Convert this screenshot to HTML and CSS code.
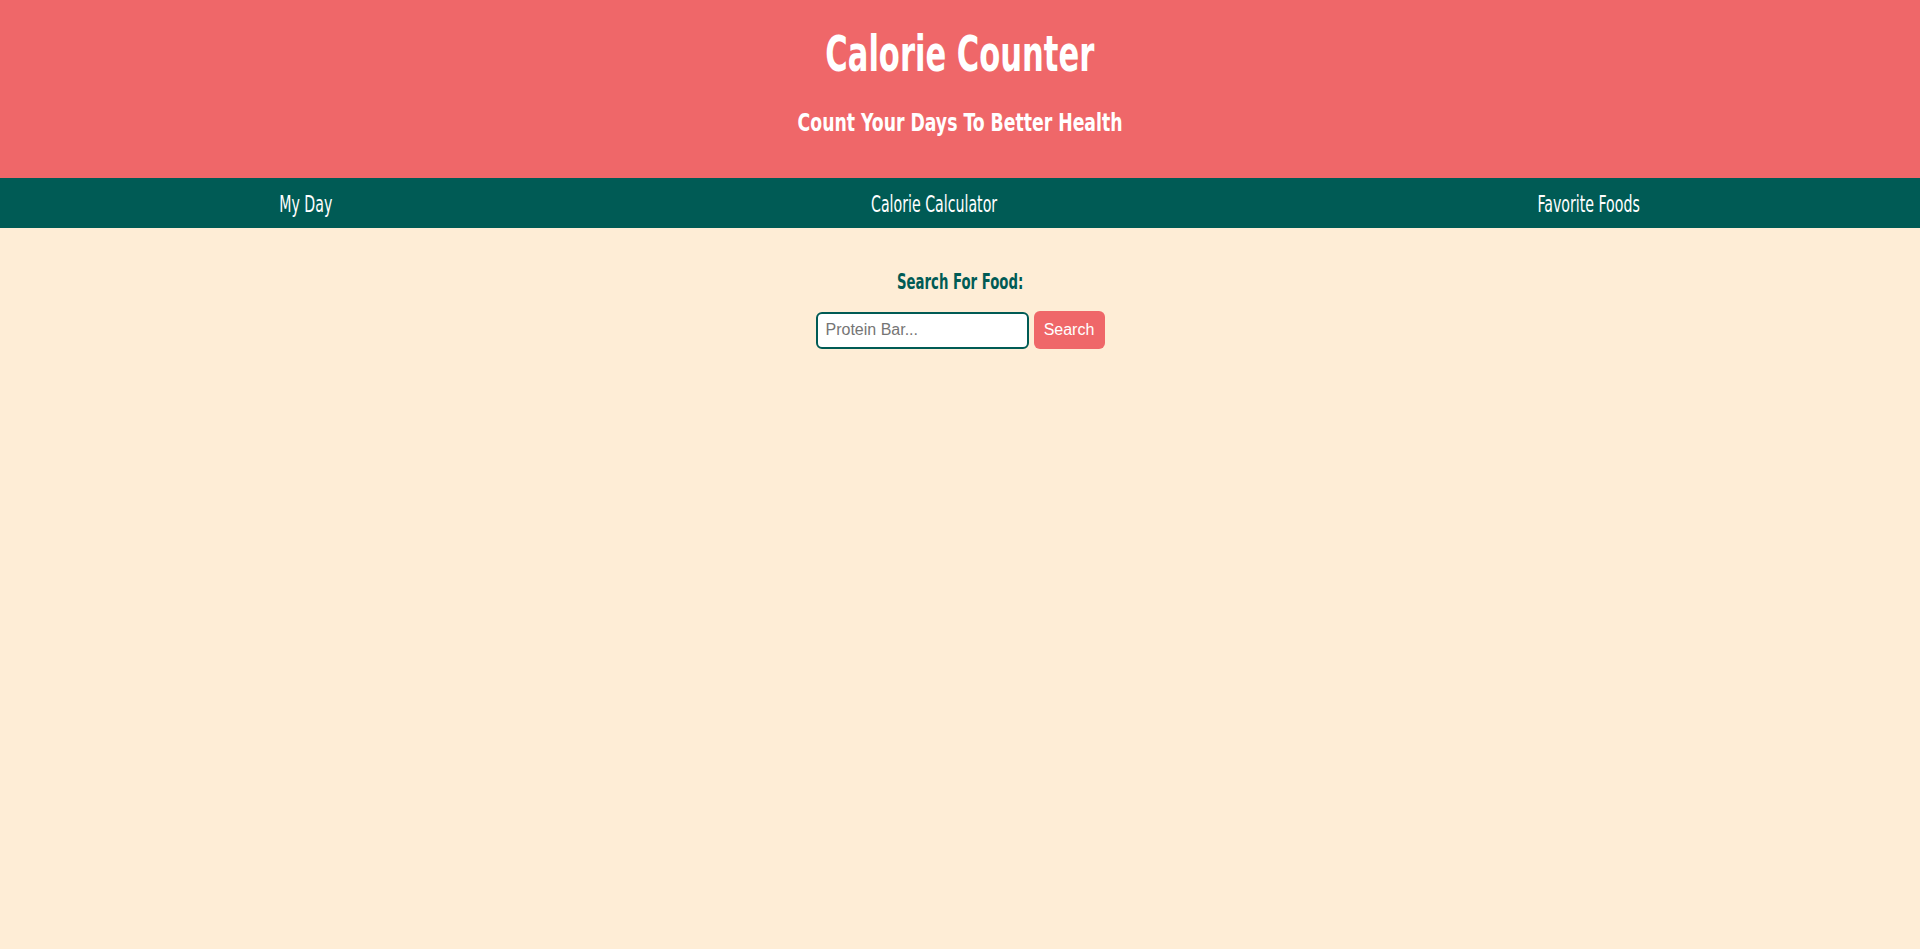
FILE: index.html
```html
<!DOCTYPE html>
<html lang="en">
<head>
<meta charset="utf-8">
<title>Calorie Counter</title>
<link rel="stylesheet" href="styles.css">
</head>
<body>
<header class="site-header">
  <h1 class="title"><span class="squeeze squeeze-title">Calorie Counter</span></h1>
  <h2 class="subtitle"><span class="squeeze squeeze-sub">Count Your Days To Better Health</span></h2>
</header>
<nav class="site-nav">
  <a class="nav-link nav-day" href="#"><span class="squeeze squeeze-nav">My Day</span></a>
  <a class="nav-link nav-calc" href="#"><span class="squeeze squeeze-nav">Calorie Calculator</span></a>
  <a class="nav-link nav-fav" href="#"><span class="squeeze squeeze-nav">Favorite Foods</span></a>
</nav>
<main class="content">
  <label class="search-label" for="food"><span class="squeeze squeeze-label">Search For Food:</span></label>
  <form class="search-form">
    <input class="search-input" id="food" type="text" placeholder="Protein Bar...">
    <button class="search-btn" type="button">Search</button>
  </form>
</main>
</body>
</html>
```
FILE: styles.css
```css
html, body {
  margin: 0;
  padding: 0;
}
body {
  background: #feedd6;
  font-family: "DejaVu Sans Condensed", "DejaVu Sans", sans-serif;
  font-stretch: condensed;
  min-height: 949px;
}
.site-header {
  background: #ef6769;
  height: 178px;
  box-sizing: border-box;
  padding-top: 25px;
  display: flex;
  flex-direction: column;
  align-items: center;
  color: #fff;
}
.title {
  margin: 0;
  font-size: 50px;
  font-weight: 700;
  line-height: normal;
  display: flex;
  justify-content: center;
  width: 266px;
}
.subtitle {
  margin: 26px 0 0;
  font-size: 24px;
  font-weight: 700;
  line-height: normal;
  display: flex;
  justify-content: center;
  width: 324px;
}
.squeeze {
  display: inline-block;
  white-space: nowrap;
  transform-origin: center;
}
.squeeze-title { transform: scaleX(0.68); }
.squeeze-sub { transform: scaleX(0.80); }
.squeeze-nav { transform: scaleX(0.685); }
.squeeze-label { transform: scaleX(0.67); }
.site-nav {
  background: #005b55;
  height: 50px;
  box-sizing: border-box;
  padding: 2px 10.5px 0;
  display: flex;
  align-items: center;
  justify-content: space-around;
}
.nav-link {
  color: #fff;
  text-decoration: none;
  font-size: 23px;
  display: flex;
  justify-content: center;
}
.nav-day { width: 51px; }
.nav-calc { width: 129px; }
.nav-fav { width: 103px; }
.content {
  padding-top: 41px;
  display: flex;
  flex-direction: column;
  align-items: center;
}
.search-label {
  color: #005b55;
  font-size: 22px;
  font-weight: 700;
  display: flex;
  justify-content: center;
  width: 126px;
}
.search-form {
  margin-top: 17px;
  display: flex;
  gap: 5px;
  align-items: center;
}
.search-input {
  box-sizing: border-box;
  width: 213px;
  height: 37px;
  border: 2px solid #005b55;
  border-radius: 6px;
  background: #fff;
  padding: 0 8px;
  font-family: "Liberation Sans", Arial, sans-serif;
  font-size: 16px;
  outline: none;
}
.search-input::placeholder {
  color: #757575;
}
.search-btn {
  box-sizing: border-box;
  height: 38px;
  width: 71px;
  border: none;
  border-radius: 6px;
  background: #ef6769;
  color: #fff;
  font-family: "Liberation Sans", Arial, sans-serif;
  font-size: 16px;
  padding: 0;
}
```
